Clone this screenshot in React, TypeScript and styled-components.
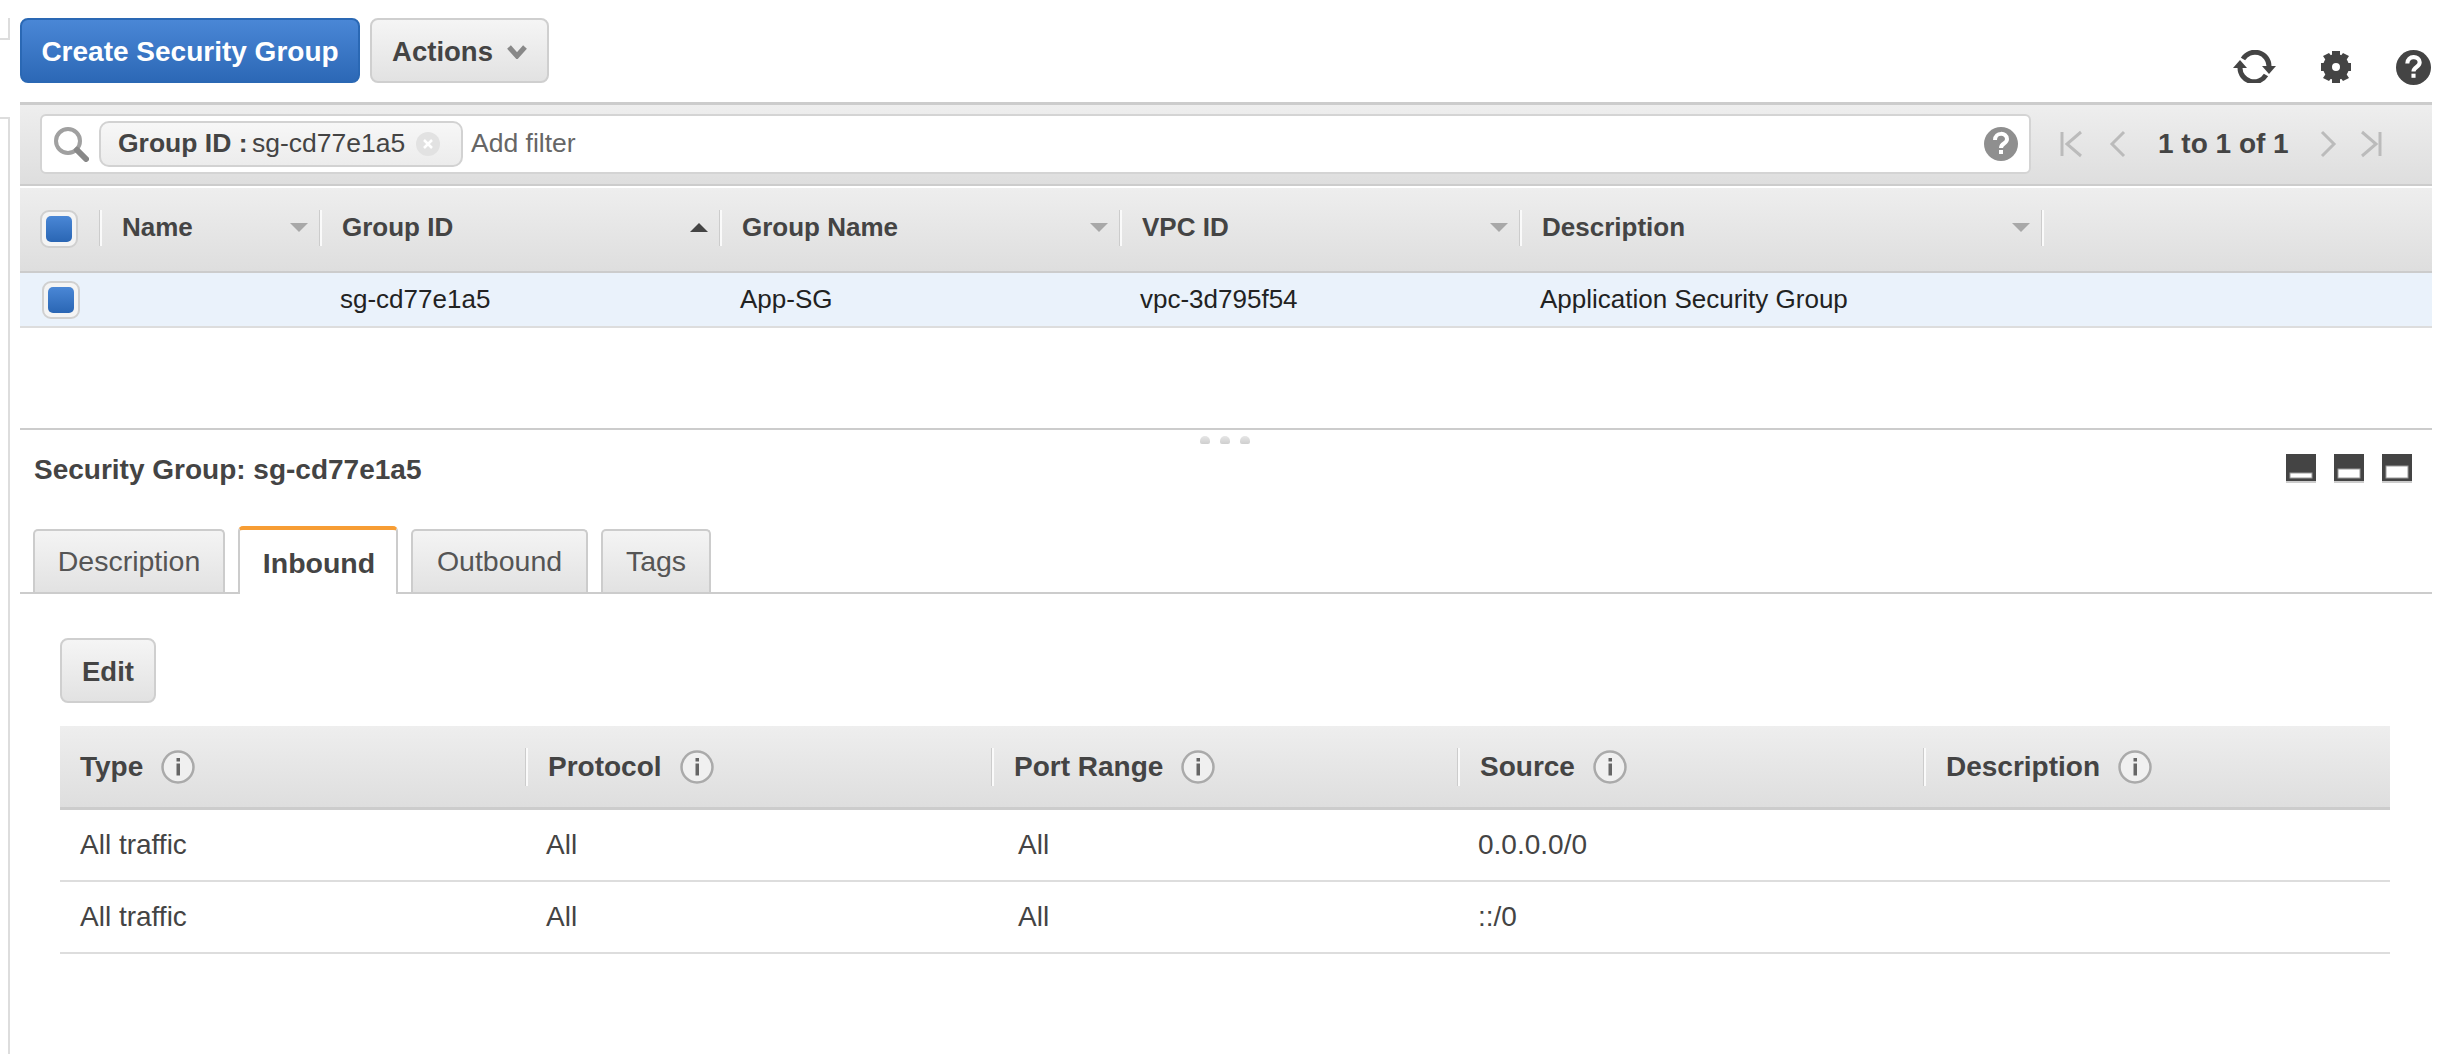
import React from "react";
import styled, { createGlobalStyle } from "styled-components";

const GlobalStyle = createGlobalStyle`
  html, body {
    margin: 0;
    padding: 0;
    background: #fff;
    font-family: "Liberation Sans", Arial, sans-serif;
    color: #444;
  }
  * { box-sizing: border-box; }
`;

const headGradient = "linear-gradient(#eeeeee, #dedede)";

const Page = styled.div`
  display: flex;
  width: 2448px;
  height: 1054px;
  overflow: hidden;
`;

const Rail = styled.div`
  display: flex;
  flex-direction: column;
  width: 20px;
  padding-top: 18px;
`;

const RailStub = styled.div`
  width: 10px;
  height: 22px;
  border-right: 2px solid #ddd;
  border-bottom: 2px solid #ddd;
`;

const RailPanel = styled.div`
  width: 10px;
  flex: 1;
  margin-top: 77px;
  border-right: 2px solid #ddd;
  border-top: 2px solid #ddd;
`;

const Main = styled.div`
  display: flex;
  flex-direction: column;
  width: 2412px;
`;

const Toolbar = styled.div`
  display: flex;
  gap: 10px;
  height: 102px;
  padding-top: 18px;
`;

const Button = styled.button<{ $primary?: boolean }>`
  display: flex;
  align-items: center;
  justify-content: center;
  gap: 14px;
  height: 65px;
  padding: 2px 0 0;
  border-radius: 8px;
  font-family: inherit;
  font-size: 27.5px;
  font-weight: 700;
  color: ${(p) => (p.$primary ? "#fff" : "#444")};
  background: ${(p) =>
    p.$primary ? "linear-gradient(#4a87d6, #2c68b6)" : "linear-gradient(#f5f5f5, #e2e2e2)"};
  border: 2px solid ${(p) => (p.$primary ? "#2a68b4" : "#cfcfcf")};
`;

const CreateButton = styled(Button)`
  width: 340px;
  font-size: 28px;
`;

const ActionsButton = styled(Button)`
  width: 179px;
`;

const ToolIcons = styled.div`
  display: flex;
  align-items: flex-start;
  margin-left: auto;
  padding: 32px 1px 0 0;
  gap: 44px;
  color: #444;
`;

const FilterBar = styled.div`
  display: flex;
  align-items: center;
  height: 84px;
  padding: 0 20px 2px;
  background: ${headGradient};
  border-top: 3px solid #ccc;
  border-bottom: 2px solid #ccc;
`;

const SearchBox = styled.div`
  display: flex;
  align-items: center;
  width: 1991px;
  height: 60px;
  padding: 0 11px 0 11px;
  background: #fff;
  border: 2px solid #d4d4d4;
  border-radius: 6px;
`;

const Chip = styled.div`
  display: flex;
  align-items: center;
  width: 364px;
  height: 46px;
  margin: 0 8px 0 10px;
  padding-left: 17px;
  border: 2px solid #d2d2d2;
  border-radius: 10px;
  background: linear-gradient(#f7f7f7, #ececec);
  font-size: 26.5px;
  white-space: pre;
`;

const ChipKey = styled.span`
  font-weight: 700;
  margin-right: -3px;
`;

const ChipClose = styled.span`
  margin-left: auto;
  margin-right: 21px;
  display: flex;
`;

const AddFilter = styled.span`
  font-size: 26.5px;
  color: #666;
`;

const SearchHelp = styled.span`
  display: flex;
  margin-left: auto;
  color: #8f8f8f;
`;

const Pager = styled.div`
  display: flex;
  align-items: center;
  margin-left: 28px;
  color: #bbb;
`;

const PagerText = styled.span`
  width: 130px;
  margin: 0 31px 0 31px;
  font-size: 28px;
  font-weight: 700;
  color: #444;
  white-space: nowrap;
`;

const gridColumns = "80px 220px 400px 400px 400px 522px 1fr";

const GroupHead = styled.div`
  display: grid;
  grid-template-columns: ${gridColumns};
  height: 85px;
  margin-top: 2px;
  padding-top: 22px;
  background: ${headGradient};
  border-bottom: 2px solid #ccc;
`;

const CheckCell = styled.div<{ $row?: boolean }>`
  padding-left: ${(p) => (p.$row ? 22 : 20)}px;
`;

const Check = styled.div`
  display: flex;
  align-items: center;
  justify-content: center;
  width: 38px;
  height: 38px;
  background: #f4f4f4;
  border: 2px solid #d0d0d0;
  border-radius: 9px;
`;

const CheckFill = styled.div`
  width: 26px;
  height: 26px;
  border-radius: 5px;
  background: linear-gradient(#4a87d6, #2a66b4);
`;

const GroupHeadCell = styled.div`
  display: flex;
  align-items: center;
  justify-content: space-between;
  height: 36px;
  padding: 0 12px 2px 20px;
  border-left: 2px solid #fafafa;
  box-shadow: -1px 0 0 #ccc;
  font-size: 26px;
  font-weight: 700;
`;

const GroupHeadEnd = styled.div`
  height: 36px;
  border-left: 2px solid #fafafa;
  box-shadow: -1px 0 0 #ccc;
`;

const SortArrow = styled.span<{ $up?: boolean }>`
  width: 0;
  height: 0;
  border-left: 9px solid transparent;
  border-right: 9px solid transparent;
  ${(p) =>
    p.$up ? "border-bottom: 9px solid #444;" : "border-top: 9px solid #a8a8a8;"}
`;

const GroupRow = styled.div`
  display: grid;
  grid-template-columns: ${gridColumns};
  align-items: center;
  height: 55px;
  background: #eaf2fb;
  border-bottom: 2px solid #ddd;
`;

const GroupCell = styled.div`
  padding-left: 20px;
  font-size: 26px;
  color: #222;
`;

const TopSpacer = styled.div`
  height: 102px;
  border-bottom: 2px solid #ccc;
`;

const Grip = styled.div`
  position: relative;
  height: 0;
`;

const GripDots = styled.div`
  position: absolute;
  left: 1180px;
  top: 6px;
  display: flex;
  gap: 10px;
`;

const GripDot = styled.span`
  width: 10px;
  height: 8px;
  background: linear-gradient(#e6e6e6, #cfcfcf);
  border-radius: 5px 5px 2px 2px;
`;

const DetailHead = styled.div`
  display: flex;
  align-items: flex-start;
  justify-content: space-between;
  height: 96px;
  padding: 23px 20px 0 14px;
`;

const DetailTitle = styled.div`
  font-size: 28px;
  line-height: 34px;
  font-weight: 700;
`;

const PaneIcons = styled.div`
  display: flex;
  gap: 18px;
  padding-top: 1px;
`;

const Tabs = styled.div`
  display: flex;
  align-items: flex-end;
  height: 68px;
  padding-left: 13px;
  border-bottom: 2px solid #ccc;
`;

const Tab = styled.div<{ $active?: boolean; $width: number }>`
  display: flex;
  align-items: center;
  justify-content: center;
  width: ${(p) => p.$width}px;
  height: ${(p) => (p.$active ? 68 : 63)}px;
  margin-right: 13px;
  margin-bottom: ${(p) => (p.$active ? -2 : 0)}px;
  padding-top: ${(p) => (p.$active ? 2 : 0)}px;
  padding-left: ${(p) => (p.$active ? 2 : 0)}px;
  font-size: 28.5px;
  font-weight: ${(p) => (p.$active ? 700 : 400)};
  color: ${(p) => (p.$active ? "#444" : "#555")};
  background: ${(p) => (p.$active ? "#fff" : "linear-gradient(#f4f4f4, #e2e2e2)")};
  border: 2px solid #ccc;
  border-bottom: ${(p) => (p.$active ? "none" : "0")};
  border-top: ${(p) => (p.$active ? "4px solid #f79d34" : "2px solid #ccc")};
  border-radius: 5px 5px 0 0;
`;

const Content = styled.div`
  display: flex;
  flex-direction: column;
  padding: 44px 0 0 40px;
  width: 2370px;
`;

const EditButton = styled(Button)`
  width: 96px;
`;

const Rules = styled.div`
  margin-top: 23px;
  width: 2330px;
`;

const RulesHead = styled.div`
  display: grid;
  grid-template-columns: repeat(5, 466px);
  height: 84px;
  padding-top: 22px;
  background: ${headGradient};
  border-bottom: 3px solid #ccc;
`;

const RulesHeadCell = styled.div<{ $first?: boolean }>`
  display: flex;
  align-items: center;
  gap: 18px;
  height: 38px;
  padding-left: 20px;
  font-size: 28px;
  font-weight: 700;
  border-left: ${(p) => (p.$first ? "none" : "2px solid #fafafa")};
  box-shadow: ${(p) => (p.$first ? "none" : "-1px 0 0 #ccc")};
`;

const RuleRow = styled.div`
  display: grid;
  grid-template-columns: repeat(5, 466px);
  align-items: center;
  height: 72px;
  border-bottom: 2px solid #ddd;
`;

const RuleCell = styled.div<{ $indent: number }>`
  padding-left: ${(p) => p.$indent}px;
  font-size: 28px;
  color: #444;
`;

const Refresh = () => (
  <svg width="43" height="33" viewBox="0 0 43 33">
    <path d="M10 9A14 14 0 0 1 36 16" fill="none" stroke="#444" strokeWidth="5" />
    <path d="M7 18A14 14 0 0 0 33 25" fill="none" stroke="#444" strokeWidth="5" />
    <path d="M29 16h14l-7 8zM0 18h14L7 10z" fill="#444" />
  </svg>
);

const Gear = () => (
  <svg width="32" height="34" viewBox="0 0 32 34">
    <circle cx="16" cy="17" r="8.5" fill="none" stroke="#444" strokeWidth="9" />
    <path
      d="M12 1h8v6h-8zM12 27h8v6h-8zM1 13h6v8H1zM25 13h6v8h-6zM3 6l6-3 4 5-6 4zM29 6l-6-3-4 5 6 4zM3 28l6 3 4-5-6-4zM29 28l-6 3-4-5 6-4z"
      fill="#444"
    />
  </svg>
);

const Help = ({ size, color }: { size: number; color: string }) => (
  <svg width={size} height={size} viewBox="0 0 34 34">
    <circle cx="17" cy="17" r="17" fill={color} />
    <path d="M11 13c0-8 12-8 12-1 0 5-6 4-6 9" fill="none" stroke="#fff" strokeWidth="4" />
    <rect x="15" y="23" width="4" height="4" fill="#fff" />
  </svg>
);

const SearchIcon = () => (
  <svg width="36" height="36" viewBox="0 0 36 36">
    <circle cx="15" cy="15" r="12" fill="none" stroke="#a0a0a0" strokeWidth="4" />
    <path d="M24 24l9 9" stroke="#888" strokeWidth="6" strokeLinecap="round" />
  </svg>
);

const ChipX = () => (
  <svg width="24" height="24" viewBox="0 0 24 24">
    <circle cx="12" cy="12" r="12" fill="#e2e2e2" />
    <path d="M8 8l8 8M16 8l-8 8" stroke="#fff" strokeWidth="2.5" />
  </svg>
);

const Caret = () => (
  <svg width="20" height="14" viewBox="0 0 20 14">
    <path d="M2 2l8 9 8-9" fill="none" stroke="#888" strokeWidth="5" />
  </svg>
);

const PagerArrow = ({ kind }: { kind: "first" | "prev" | "next" | "last" }) => {
  const paths = {
    first: "M3 2v24M22 2L8 14l14 12",
    prev: "M15 2L3 14l12 12",
    next: "M3 2l12 12L3 26",
    last: "M19 2v24M1 2l14 12L1 26",
  };
  const width = kind === "first" || kind === "last" ? 24 : 18;
  return (
    <svg width={width} height="28" viewBox={`0 0 ${width} 28`}>
      <path d={paths[kind]} fill="none" stroke="currentColor" strokeWidth="3" />
    </svg>
  );
};

const PagerGap = styled.span<{ $w: number }>`
  display: inline-block;
  width: ${(p) => p.$w}px;
`;

const Info = () => (
  <svg width="34" height="34" viewBox="0 0 34 34">
    <circle cx="17" cy="17" r="15.5" fill="#f0f0f0" stroke="#aaa" strokeWidth="2.5" />
    <rect x="15.5" y="8" width="3.5" height="3.5" fill="#666" />
    <rect x="15.5" y="13.5" width="3.5" height="12" fill="#666" />
  </svg>
);

const PaneIcon = ({ fill }: { fill: number }) => (
  <svg width="30" height="29" viewBox="0 0 30 29">
    <rect width="30" height="27" fill="#444" />
    <rect y="27" width="30" height="2" fill="#ccc" />
    <rect x="3.5" y={23.5 - fill} width="23" height={fill + 1} fill="#999" />
    <rect x="4.5" y={24.5 - fill} width="21" height={fill - 1} fill="#fff" />
  </svg>
);

const groupColumns = [
  { title: "Name", cell: "" },
  { title: "Group ID", cell: "sg-cd77e1a5", up: true },
  { title: "Group Name", cell: "App-SG" },
  { title: "VPC ID", cell: "vpc-3d795f54" },
  { title: "Description", cell: "Application Security Group" },
];

const ruleHeads = ["Type", "Protocol", "Port Range", "Source", "Description"];
const ruleIndents = [20, 20, 26, 20, 0];
const rules = [
  ["All traffic", "All", "All", "0.0.0.0/0", ""],
  ["All traffic", "All", "All", "::/0", ""],
];

const tabs = [
  { name: "Description", width: 192 },
  { name: "Inbound", width: 160, active: true },
  { name: "Outbound", width: 177 },
  { name: "Tags", width: 110 },
];

export default function App() {
  return (
    <Page>
      <GlobalStyle />
      <Rail>
        <RailStub />
        <RailPanel />
      </Rail>
      <Main>
        <Toolbar>
          <CreateButton $primary>Create Security Group</CreateButton>
          <ActionsButton>
            Actions
            <Caret />
          </ActionsButton>
          <ToolIcons>
            <Refresh />
            <Gear />
            <Help size={35} color="#444" />
          </ToolIcons>
        </Toolbar>

        <FilterBar>
          <SearchBox>
            <SearchIcon />
            <Chip>
              <ChipKey>Group ID :</ChipKey> sg-cd77e1a5
              <ChipClose>
                <ChipX />
              </ChipClose>
            </Chip>
            <AddFilter>Add filter</AddFilter>
            <SearchHelp>
              <Help size={34} color="#8f8f8f" />
            </SearchHelp>
          </SearchBox>
          <Pager>
            <PagerArrow kind="first" />
            <PagerGap $w={26} />
            <PagerArrow kind="prev" />
            <PagerText>1 to 1 of 1</PagerText>
            <PagerArrow kind="next" />
            <PagerGap $w={24} />
            <PagerArrow kind="last" />
          </Pager>
        </FilterBar>

        <GroupHead>
          <CheckCell>
            <Check>
              <CheckFill />
            </Check>
          </CheckCell>
          {groupColumns.map((col) => (
            <GroupHeadCell key={col.title}>
              {col.title}
              <SortArrow $up={col.up} />
            </GroupHeadCell>
          ))}
          <GroupHeadEnd />
        </GroupHead>
        <GroupRow>
          <CheckCell $row>
            <Check>
              <CheckFill />
            </Check>
          </CheckCell>
          {groupColumns.map((col) => (
            <GroupCell key={col.title}>{col.cell}</GroupCell>
          ))}
        </GroupRow>

        <TopSpacer />
        <Grip>
          <GripDots>
            <GripDot />
            <GripDot />
            <GripDot />
          </GripDots>
        </Grip>

        <DetailHead>
          <DetailTitle>Security Group: sg-cd77e1a5</DetailTitle>
          <PaneIcons>
            <PaneIcon fill={5} />
            <PaneIcon fill={9} />
            <PaneIcon fill={12} />
          </PaneIcons>
        </DetailHead>

        <Tabs>
          {tabs.map((tab) => (
            <Tab key={tab.name} $active={tab.active} $width={tab.width}>
              {tab.name}
            </Tab>
          ))}
        </Tabs>

        <Content>
          <EditButton>Edit</EditButton>
          <Rules>
            <RulesHead>
              {ruleHeads.map((head, i) => (
                <RulesHeadCell key={head} $first={i === 0}>
                  {head}
                  <Info />
                </RulesHeadCell>
              ))}
            </RulesHead>
            {rules.map((rule, r) => (
              <RuleRow key={r}>
                {rule.map((value, i) => (
                  <RuleCell key={i} $indent={ruleIndents[i]}>
                    {value}
                  </RuleCell>
                ))}
              </RuleRow>
            ))}
          </Rules>
        </Content>
      </Main>
    </Page>
  );
}
